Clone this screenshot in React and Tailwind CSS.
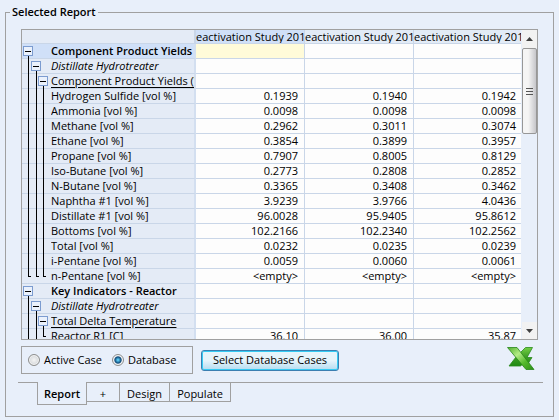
import { useState } from "react";

const ROWS = [
  { level: 0, kind: "bold", label: "Component Product Yields (Volume)", active: true },
  { level: 1, kind: "italic", label: "Distillate Hydrotreater" },
  { level: 2, kind: "underline", label: "Component Product Yields (Volume)" },
  { label: "Hydrogen Sulfide [vol %]", values: ["0.1939", "0.1940", "0.1942"] },
  { label: "Ammonia [vol %]", values: ["0.0098", "0.0098", "0.0098"] },
  { label: "Methane [vol %]", values: ["0.2962", "0.3011", "0.3074"] },
  { label: "Ethane [vol %]", values: ["0.3854", "0.3899", "0.3957"] },
  { label: "Propane [vol %]", values: ["0.7907", "0.8005", "0.8129"] },
  { label: "Iso-Butane [vol %]", values: ["0.2773", "0.2808", "0.2852"] },
  { label: "N-Butane [vol %]", values: ["0.3365", "0.3408", "0.3462"] },
  { label: "Naphtha #1 [vol %]", values: ["3.9239", "3.9766", "4.0436"] },
  { label: "Distillate #1 [vol %]", values: ["96.0028", "95.9405", "95.8612"] },
  { label: "Bottoms [vol %]", values: ["102.2166", "102.2340", "102.2562"] },
  { label: "Total [vol %]", values: ["0.0232", "0.0235", "0.0239"] },
  { label: "i-Pentane [vol %]", values: ["0.0059", "0.0060", "0.0061"] },
  { label: "n-Pentane [vol %]", values: ["<empty>", "<empty>", "<empty>"], ends: [0, 1, 2] },
  { level: 0, kind: "bold", label: "Key Indicators - Reactor" },
  { level: 1, kind: "italic", label: "Distillate Hydrotreater" },
  { level: 2, kind: "underline", label: "Total Delta Temperature" },
  { label: "Reactor R1 [C]", values: ["36.10", "36.00", "35.87"], ends: [2] },
];

const LABEL_STYLE = {
  bold: "font-semibold",
  italic: "italic",
  underline: "underline underline-offset-2",
};

const GUIDE_X = [6, 14, 21];
const TOGGLE_LEFT = ["left-px", "left-[9px]", "left-[16px]"];

function Guides({ row }) {
  const level = row.level ?? 3;
  const ends = row.ends ?? [];
  return (
    <div className="relative h-[15px] w-[29px] shrink-0">
      <svg width="29" height="15" className="block" fill="#000" shapeRendering="crispEdges" aria-hidden="true">
        {GUIDE_X.map((x, i) => {
          if (i > level) return null;
          if (i === level) return <rect key={x} x={x} y="12" width="1" height="3" />;
          if (ends.includes(i))
            return <path key={x} d={`M${x} 0h1v7h2v1h-3z`} />;
          return <rect key={x} x={x} y="0" width="1" height="15" />;
        })}
      </svg>
      {level < 3 && (
        <button
          type="button"
          aria-label={`Collapse ${row.label}`}
          className={`absolute top-[2px] flex h-[10px] w-[10px] items-center justify-center border border-[#7c9cd0] bg-[#eaf1fc] ${TOGGLE_LEFT[level]}`}
        >
          <span className="h-px w-[6px] bg-black" />
        </button>
      )}
    </div>
  );
}

function ReportTable() {
  return (
    <div className="min-w-0 flex-1 overflow-hidden">
      <table className="w-full table-fixed border-separate border-spacing-0">
        <colgroup>
          <col className="w-[174px]" />
          <col className="w-[109px]" />
          <col className="w-[109px]" />
          <col />
        </colgroup>
        <thead>
          <tr>
            <th className="border-r-2 border-b border-[#c9d6e8] bg-[#e4ebf6] p-0" aria-label="Variable" />
            {[0, 1, 2].map((c) => (
              <th
                key={c}
                className={`overflow-hidden border-b border-[#c9d6e8] p-0 text-left font-normal whitespace-nowrap ${c < 2 ? "border-r" : ""} ${c === 0 ? "bg-[#d0e0f8]" : "bg-[#e2ebf6]"}`}
              >
                <div className="h-[13px] overflow-hidden leading-[13px]">eactivation Study 201</div>
              </th>
            ))}
          </tr>
        </thead>
        <tbody>
          {ROWS.map((row, r) => (
            <tr key={r}>
              <th
                scope="row"
                className={`border-r-2 border-b border-r-[#d3dff0] border-b-[#c9d6e8] p-0 text-left font-normal ${row.active ? "bg-[#d0e0f8]" : "bg-[#e4ebf6]"}`}
              >
                <div className="flex h-[14px]">
                  <Guides row={row} />
                  <span className={`min-w-0 flex-1 overflow-hidden leading-[14px] whitespace-nowrap ${LABEL_STYLE[row.kind] ?? ""}`}>
                    {row.label}
                  </span>
                </div>
              </th>
              {[0, 1, 2].map((c) => (
                <td
                  key={c}
                  className={`border-b border-[#c9d6e8] p-0 text-right ${c < 2 ? "border-r pr-[6px]" : "pr-[5px]"} ${row.active && c === 0 ? "bg-[#fffbd9]" : "bg-[#fdfdfd]"}`}
                >
                  <div className="h-[14px] leading-[14px]">{row.values?.[c]}</div>
                </td>
              ))}
            </tr>
          ))}
        </tbody>
      </table>
    </div>
  );
}

function ScrollBar() {
  return (
    <div className="ml-px flex w-[15px] shrink-0 flex-col bg-[#e8effa]">
      <button type="button" aria-label="Scroll up" className="flex h-[18px] items-center justify-center bg-[#f2f2f2]">
        <svg width="7" height="4" viewBox="0 0 7 4" aria-hidden="true">
          <path d="M3.5 0 7 4H0z" fill="#404040" />
        </svg>
      </button>
      <div className="flex h-[86px] flex-col items-center justify-center gap-[2px] rounded-[2px] border border-[#979797] bg-linear-to-r from-[#f5f5f5] from-40% to-[#c6c6ca]">
        <span className="h-px w-[7px] bg-[#555]" />
        <span className="h-px w-[7px] bg-[#555]" />
        <span className="h-px w-[7px] bg-[#555]" />
      </div>
      <button type="button" aria-label="Scroll down" className="mt-auto flex h-[17px] items-center justify-center bg-[#f2f2f2]">
        <svg width="7" height="4" viewBox="0 0 7 4" aria-hidden="true">
          <path d="M0 0H7L3.5 4z" fill="#404040" />
        </svg>
      </button>
    </div>
  );
}

function ExcelIcon() {
  return (
    <svg width="28" height="24" viewBox="0 0 28 24" aria-hidden="true">
      <defs>
        <linearGradient id="xlLight" x1="0" y1="0" x2="1" y2="1">
          <stop offset="0" stopColor="#4fae2c" />
          <stop offset="0.35" stopColor="#b4ec86" />
          <stop offset="0.65" stopColor="#56bb2e" />
          <stop offset="1" stopColor="#2c8f16" />
        </linearGradient>
        <linearGradient id="xlDark" x1="0" y1="0" x2="0" y2="1">
          <stop offset="0" stopColor="#74d044" />
          <stop offset="0.5" stopColor="#3f9f26" />
          <stop offset="1" stopColor="#1f8a12" />
        </linearGradient>
      </defs>
      <path d="M18.5 0.5h7l-5.500 10h5l-4.500 7-4-1-3 2.500H2L9 10z" fill="url(#xlDark)" stroke="#2a8a1c" strokeWidth="0.8" />
      <path d="M0.500 0.500h9.500L27 22.500h-8z" fill="url(#xlLight)" stroke="#278619" strokeWidth="0.8" />
    </svg>
  );
}

function CaseRadio({ label, checked, onChange }) {
  return (
    <label className="flex items-center gap-1">
      <input
        type="radio"
        name="source"
        checked={checked}
        onChange={onChange}
        className="h-3 w-3 appearance-none rounded-full border border-[#8e8f8f] bg-[#dcdcdc] bg-radial from-[#f4f4f4] to-[#c8ccd0] shadow-[inset_0_0_0_1px_#f4f4f4] checked:from-[#55c3ec] checked:from-10% checked:via-[#0e4a78] checked:via-45% checked:to-[#e4eaf0] checked:to-60%"
      />
      {label}
    </label>
  );
}

export default function App() {
  const [source, setSource] = useState("Database");
  return (
    <main className="min-h-screen bg-[#e8effa] px-1 pt-1 pb-[3px] font-['Open_Sans','Noto_Sans',sans-serif] text-[11px] leading-4 text-black">
      <fieldset className="mx-px min-w-0 border border-[#a0a0a0] px-3 pb-[11px]">
        <legend className="-ml-2 px-[2px] font-semibold">Selected Report</legend>

        <div className="mx-[3px] mt-[9px] flex h-[311px] items-stretch overflow-hidden border border-[#a0a0a0]">
          <ReportTable />
          <ScrollBar />
        </div>

        <div className="mx-[3px] mt-[6px] flex items-center">
          <div className="flex h-7 w-[172px] items-center gap-[10px] border border-[#a0a0a0] pl-[6px]">
            <CaseRadio label="Active Case" checked={source === "Active"} onChange={() => setSource("Active")} />
            <CaseRadio label="Database" checked={source === "Database"} onChange={() => setSource("Database")} />
          </div>
          <button
            type="button"
            className="ml-2 h-[21px] w-[138px] rounded-[3px] border border-[#3c7fb1] bg-linear-to-b from-[#e6f4fb] from-50% to-[#b4dcf0] to-100% shadow-[inset_0_0_0_1px_#35cbf4]"
          >
            Select Database Cases
          </button>
          <button type="button" aria-label="Export to Excel" className="mr-[3px] ml-auto self-start pt-px">
            <ExcelIcon />
          </button>
        </div>

        <div role="tablist" className="mt-2 flex items-start">
          <span className="h-px w-[19px] bg-[#a0a0a0]" />
          <button type="button" role="tab" aria-selected="true" className="h-[23px] w-[50px] border border-t-0 border-[#a0a0a0] pt-px font-semibold">
            Report
          </button>
          <button type="button" role="tab" aria-selected="false" className="h-5 w-[33px] border-y border-r border-[#a0a0a0] pt-[3px]">
            +
          </button>
          <button type="button" role="tab" aria-selected="false" className="h-5 w-[50px] border-y border-r border-[#a0a0a0] pt-[3px]">
            Design
          </button>
          <button type="button" role="tab" aria-selected="false" className="h-5 w-[61px] border-y border-r border-[#a0a0a0] pt-[3px]">
            Populate
          </button>
          <span className="-mr-[2px] h-px flex-1 bg-[#a0a0a0]" />
        </div>
      </fieldset>
    </main>
  );
}
